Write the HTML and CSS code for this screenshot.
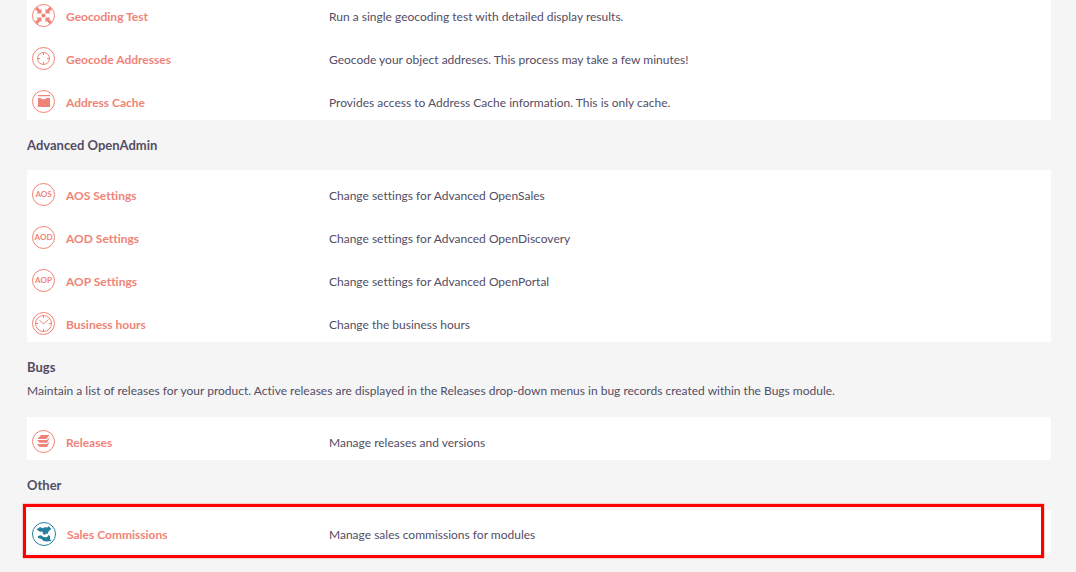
FILE: index.html
```
<!DOCTYPE html>
<html lang="en">
<head>
    <meta charset="UTF-8">
    <meta name="viewport" content="width=device-width, initial-scale=1.0">
    <title>Administration</title>
    <link rel="stylesheet" href="styles.css">
</head>
<body>
    <main class="admin">
        <!-- Geocoding -->
        <table class="admin-table admin-table-first">
            <tr>
                <th scope="row">
                    <a href="#">
                        <svg class="icon" viewBox="0 0 23 23">
                            <circle class="ring" cx="11.5" cy="11.5" r="11"/>
                            <circle cx="11.5" cy="11.5" r="2.1"/>
                            <path d="M9.5 9.5H4.500l1.500-1.500L3 5l2.200-2.200 3 3.200L9.500 4.500zM13.500 9.500h5l-1.500-1.500L20 5l-2.200-2.200-3 3.200-1.300-1.500zM9.500 13.500h-5L6 15l-3 3 2.200 2.200 3-3.200 1.300 1.500zM13.500 13.500h5L17 15l3 3-2.200 2.200-3-3.200-1.300 1.500z"/>
                        </svg>
                        <span>Geocoding Test</span>
                    </a>
                </th>
                <td>Run a single geocoding test with detailed display results.</td>
            </tr>
            <tr>
                <th scope="row">
                    <a href="#">
                        <svg class="icon" viewBox="0 0 23 23">
                            <circle class="ring" cx="11.5" cy="11.5" r="11"/>
                            <circle class="line" cx="11.5" cy="11.5" r="6"/>
                            <path class="line" d="M11.5 5.5v2.500M11.500 15v2.500M5.500 11.500H8M15 11.500h2.500"/>
                        </svg>
                        <span>Geocode Addresses</span>
                    </a>
                </th>
                <td>Geocode your object addreses. This process may take a few minutes!</td>
            </tr>
            <tr>
                <th scope="row">
                    <a href="#">
                        <svg class="icon" viewBox="0 0 23 23">
                            <circle class="ring" cx="11.5" cy="11.5" r="11"/>
                            <path d="M6 5h12v1.3H6zM6 8h3v1h1.500l1 .6 1-.6H14V8h4v9H6z"/>
                        </svg>
                        <span>Address Cache</span>
                    </a>
                </th>
                <td>Provides access to Address Cache information. This is only cache.</td>
            </tr>
        </table>

        <!-- Advanced OpenAdmin -->
        <h2>Advanced OpenAdmin</h2>
        <table class="admin-table">
            <tr>
                <th scope="row">
                    <a href="#">
                        <svg class="icon" viewBox="0 0 23 23">
                            <circle class="ring" cx="11.5" cy="11.5" r="11"/>
                            <text x="11.5" y="14">AOS</text>
                        </svg>
                        <span>AOS Settings</span>
                    </a>
                </th>
                <td>Change settings for Advanced OpenSales</td>
            </tr>
            <tr>
                <th scope="row">
                    <a href="#">
                        <svg class="icon" viewBox="0 0 23 23">
                            <circle class="ring" cx="11.5" cy="11.5" r="11"/>
                            <text x="11.5" y="14">AOD</text>
                        </svg>
                        <span>AOD Settings</span>
                    </a>
                </th>
                <td>Change settings for Advanced OpenDiscovery</td>
            </tr>
            <tr>
                <th scope="row">
                    <a href="#">
                        <svg class="icon" viewBox="0 0 23 23">
                            <circle class="ring" cx="11.5" cy="11.5" r="11"/>
                            <text x="11.5" y="14">AOP</text>
                        </svg>
                        <span>AOP Settings</span>
                    </a>
                </th>
                <td>Change settings for Advanced OpenPortal</td>
            </tr>
            <tr>
                <th scope="row">
                    <a href="#">
                        <svg class="icon" viewBox="0 0 23 23">
                            <circle class="ring" cx="11.5" cy="11.5" r="11"/>
                            <circle class="line" cx="11.5" cy="11.5" r="8"/>
                            <path class="line" d="M7.500 8l4 4 5-4.500M11.500 3.500V6M11.500 17v2.500M3.500 11.500H6M17 11.500h2.500"/>
                        </svg>
                        <span>Business hours</span>
                    </a>
                </th>
                <td>Change the business hours</td>
            </tr>
        </table>

        <!-- Bugs -->
        <h2>Bugs</h2>
        <p>Maintain a list of releases for your product. Active releases are displayed in the Releases drop-down menus in bug records created within the Bugs module.</p>
        <table class="admin-table">
            <tr>
                <th scope="row">
                    <a href="#">
                        <svg class="icon" viewBox="0 0 23 23">
                            <circle class="ring" cx="11.5" cy="11.5" r="11"/>
                            <path d="M9 5h8.500L14.500 9h-9zM5 10h9.800l3-2.500-2.700 5.200H7.500zM5 14h9.800l3-2.500-2.700 5.500H7.500z"/>
                        </svg>
                        <span>Releases</span>
                    </a>
                </th>
                <td>Manage releases and versions</td>
            </tr>
        </table>

        <!-- Other -->
        <h2>Other</h2>
        <div class="highlight">
            <table class="admin-table">
                <tr>
                    <th scope="row">
                        <a href="#">
                            <svg class="icon icon-custom" viewBox="0 0 24 24">
                                <circle class="ring" cx="12" cy="12" r="11.5"/>
                                <path d="M4.500 7.500L8 5l2.500 1.200L13.500 5l1.500.7L16.500 4l2.800 3-2.800 2.500-1 2.500-1.500-.5-1 1.500-2-1-.5-2.500-2.500.2z"/>
                                <path d="M6 14l3-.7 2.500 1.700 3.500.3 1.500-2.300 1.500 1v3l1.500 2-4.500.5-3.500-.5-2-2L6 16z"/>
                            </svg>
                            <span>Sales Commissions</span>
                        </a>
                    </th>
                    <td>Manage sales commissions for modules</td>
                </tr>
            </table>
        </div>
    </main>
</body>
</html>
```
FILE: styles.css
```
body {
    margin: 0;
    background-color: #f5f5f5;
    color: #534d64;
    font-family: Lato, "Liberation Sans", sans-serif;
    font-size: 12px;
    font-variant-ligatures: none;
    line-height: 20px;
}
.admin {
    padding: 0 25px 16px 27px;
}
h2 {
    margin: 0;
    padding: 15px 0;
    font-size: 13px;
    font-weight: bold;
    line-height: 20px;
}
p {
    margin: -11px 0 16px;
}
.admin-table {
    width: 100%;
    table-layout: fixed;
    border-collapse: collapse;
    background-color: #fff;
}
.admin-table th,
.admin-table td {
    padding: 13px 0 7px;
    text-align: left;
    vertical-align: middle;
}
.admin-table th {
    width: 297px;
    height: 23px;
    padding-left: 5px;
}
.admin-table td {
    height: 24px;
    padding-top: 14px;
    padding-bottom: 5px;
}
.admin-table-first tr:first-child th {
    padding-top: 4px;
}
.admin-table-first tr:first-child td {
    padding-top: 5px;
}
.admin-table a {
    display: flex;
    align-items: center;
    gap: 11px;
    color: #f08377;
    font-weight: bold;
    text-decoration: none;
}
.admin-table a span {
    padding-top: 3px;
}
/* Icons */
.icon {
    flex: none;
    width: 23px;
    height: 23px;
    fill: #f08377;
    stroke: none;
}
.icon .ring,
.icon .line {
    fill: none;
    stroke: #f08377;
    stroke-width: 1;
}
.icon text {
    font-size: 8px;
    font-weight: bold;
    text-anchor: middle;
}
.icon-custom {
    width: 24px;
    height: 24px;
    fill: #24809b;
}
.icon-custom .ring {
    stroke: #24809b;
}
/* Red frame around the new module's entry */
.highlight {
    position: relative;
}
.highlight .admin-table th {
    padding-top: 12px;
}
.highlight .admin-table td {
    padding-top: 13px;
    padding-bottom: 6px;
}
.highlight .admin-table a span {
    padding-top: 2px;
}
.highlight::after {
    content: "";
    position: absolute;
    top: -6px;
    right: 7px;
    bottom: -5px;
    left: -4px;
    border: 3px solid #f00;
    box-shadow: 0 0 1px #f00;
    pointer-events: none;
}
```
